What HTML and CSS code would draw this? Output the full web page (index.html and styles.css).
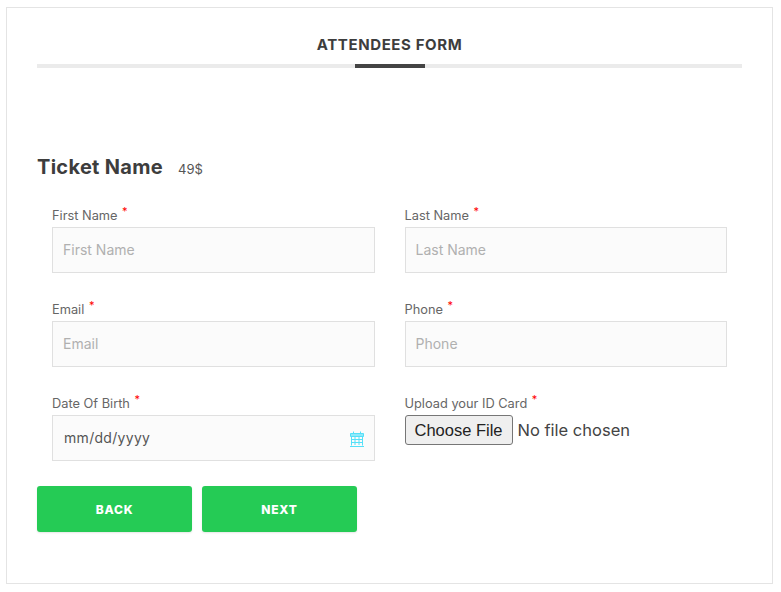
FILE: index.html
```html
<!DOCTYPE html>
<html lang="en">
<head>
  <meta charset="UTF-8">
  <meta name="viewport" content="width=device-width, initial-scale=1.0">
  <title>Attendees Form</title>
  <link rel="stylesheet" href="styles.css">
</head>
<body>
  <div class="card">
    <div class="tab-head">
      <h2 class="tab-title">ATTENDEES FORM</h2>
      <div class="tab-bar"><span class="tab-active"></span></div>
    </div>
    <div class="ticket-head">
      <h3 class="ticket-name">Ticket Name</h3>
      <span class="ticket-price">49$</span>
    </div>
    <form class="fields">
      <div class="form-group">
        <label for="firstName">First Name <sup class="req">*</sup></label>
        <input type="text" id="firstName" placeholder="First Name">
      </div>
      <div class="form-group">
        <label for="lastName">Last Name <sup class="req">*</sup></label>
        <input type="text" id="lastName" placeholder="Last Name">
      </div>
      <div class="form-group">
        <label for="email">Email <sup class="req">*</sup></label>
        <input type="text" id="email" placeholder="Email">
      </div>
      <div class="form-group">
        <label for="phone">Phone <sup class="req">*</sup></label>
        <input type="text" id="phone" placeholder="Phone">
      </div>
      <div class="form-group">
        <label for="dob">Date Of Birth <sup class="req">*</sup></label>
        <div class="date-box" id="dob">
          <span>mm/dd/yyyy</span>
          <svg class="cal-icon" width="14" height="16" viewBox="0 0 14 16" fill="none" stroke="#55e0f8" stroke-width="1">
            <path d="M3.5 0.5v3M10.5 0.5v3"/>
            <path d="M0.5 2.5h13v3h-13z" fill="#8fe9fa"/>
            <path d="M1.5 5.5v9M12.5 5.5v9M0 15.5h14M1.5 8.5h11M1.5 11.5h11M5 6v8M9 6v8"/>
          </svg>
        </div>
      </div>
      <div class="form-group">
        <label for="idCard">Upload your ID Card <sup class="req">*</sup></label>
        <input type="file" id="idCard" class="file-input">
      </div>
    </form>
    <div class="actions">
      <button type="button" class="btn">BACK</button>
      <button type="button" class="btn">NEXT</button>
    </div>
  </div>
</body>
</html>
```

FILE: styles.css
```css
body {
  font-family: Inter, "Noto Sans", sans-serif;
  background-color: #fff;
  color: #444;
  margin: 7px 8px 8px 6px;
  padding: 0;
}
.card {
  width: 767px;
  height: 577px;
  box-sizing: border-box;
  padding: 27px 30px 0;
  border: 1px solid #e4e4e4;
}
.tab-head {
  text-align: center;
}
.tab-title {
  margin: 0;
  font-size: 15px;
  line-height: 20px;
  font-weight: 700;
  color: #3d3d3d;
  letter-spacing: 0.6px;
}
.tab-bar {
  display: flex;
  justify-content: center;
  height: 4px;
  margin-top: 9px;
  background-color: #ebebeb;
}
.tab-active {
  width: 70px;
  background-color: #444;
}
.ticket-head {
  display: flex;
  align-items: baseline;
  gap: 15px;
  margin-top: 87px;
}
.ticket-name {
  margin: 0;
  font-size: 20px;
  line-height: 24px;
  font-weight: 700;
  color: #3d3d3d;
  letter-spacing: 0.3px;
}
.ticket-price {
  font-size: 13px;
  color: #555;
}
.fields {
  display: grid;
  grid-template-columns: 1fr 1fr;
  column-gap: 30px;
  row-gap: 25px;
  padding: 0 15px;
  margin-top: 25px;
}
.form-group {
  height: 69px;
}
label {
  display: block;
  height: 23px;
  box-sizing: border-box;
  padding-top: 4px;
  font-size: 12.8px;
  line-height: 16px;
  color: #666;
}
.req {
  color: #f00;
  font-size: 11px;
  line-height: 0;
  vertical-align: 5px;
  margin-left: 1px;
}
input[type="text"],
.date-box {
  display: block;
  width: 100%;
  height: 46px;
  box-sizing: border-box;
  padding: 0 10px 2px;
  border: 1px solid #e0e0e0;
  background-color: #fbfbfb;
  font-family: inherit;
  font-size: 14px;
  color: #444;
  outline: none;
}
input[type="text"]::placeholder {
  color: #b0b0b0;
  opacity: 1;
}
.date-box {
  display: flex;
  align-items: center;
  justify-content: space-between;
  padding: 0 10px 2px 11px;
  color: #555;
  letter-spacing: 0.3px;
}
.cal-icon {
  margin-top: 4px;
}
.file-input {
  display: block;
  font-family: inherit;
  font-size: 16.5px;
  color: #444;
  width: 100%;
}
.file-input::file-selector-button {
  height: 30px;
  padding: 0 9px;
  margin-right: 5px;
  border-radius: 3px;
  border: 1px solid #767676;
  background-color: #efefef;
  color: #222;
}
.actions {
  display: flex;
  gap: 10px;
  margin-top: 25px;
}
.btn {
  width: 155px;
  height: 46px;
  border: none;
  border-radius: 3px;
  background-color: #25cb55;
  color: #fff;
  font-family: inherit;
  font-size: 12px;
  font-weight: 800;
  letter-spacing: 0.8px;
  box-shadow: 0 1px 2px rgba(0, 0, 0, 0.1);
  cursor: pointer;
}
```
